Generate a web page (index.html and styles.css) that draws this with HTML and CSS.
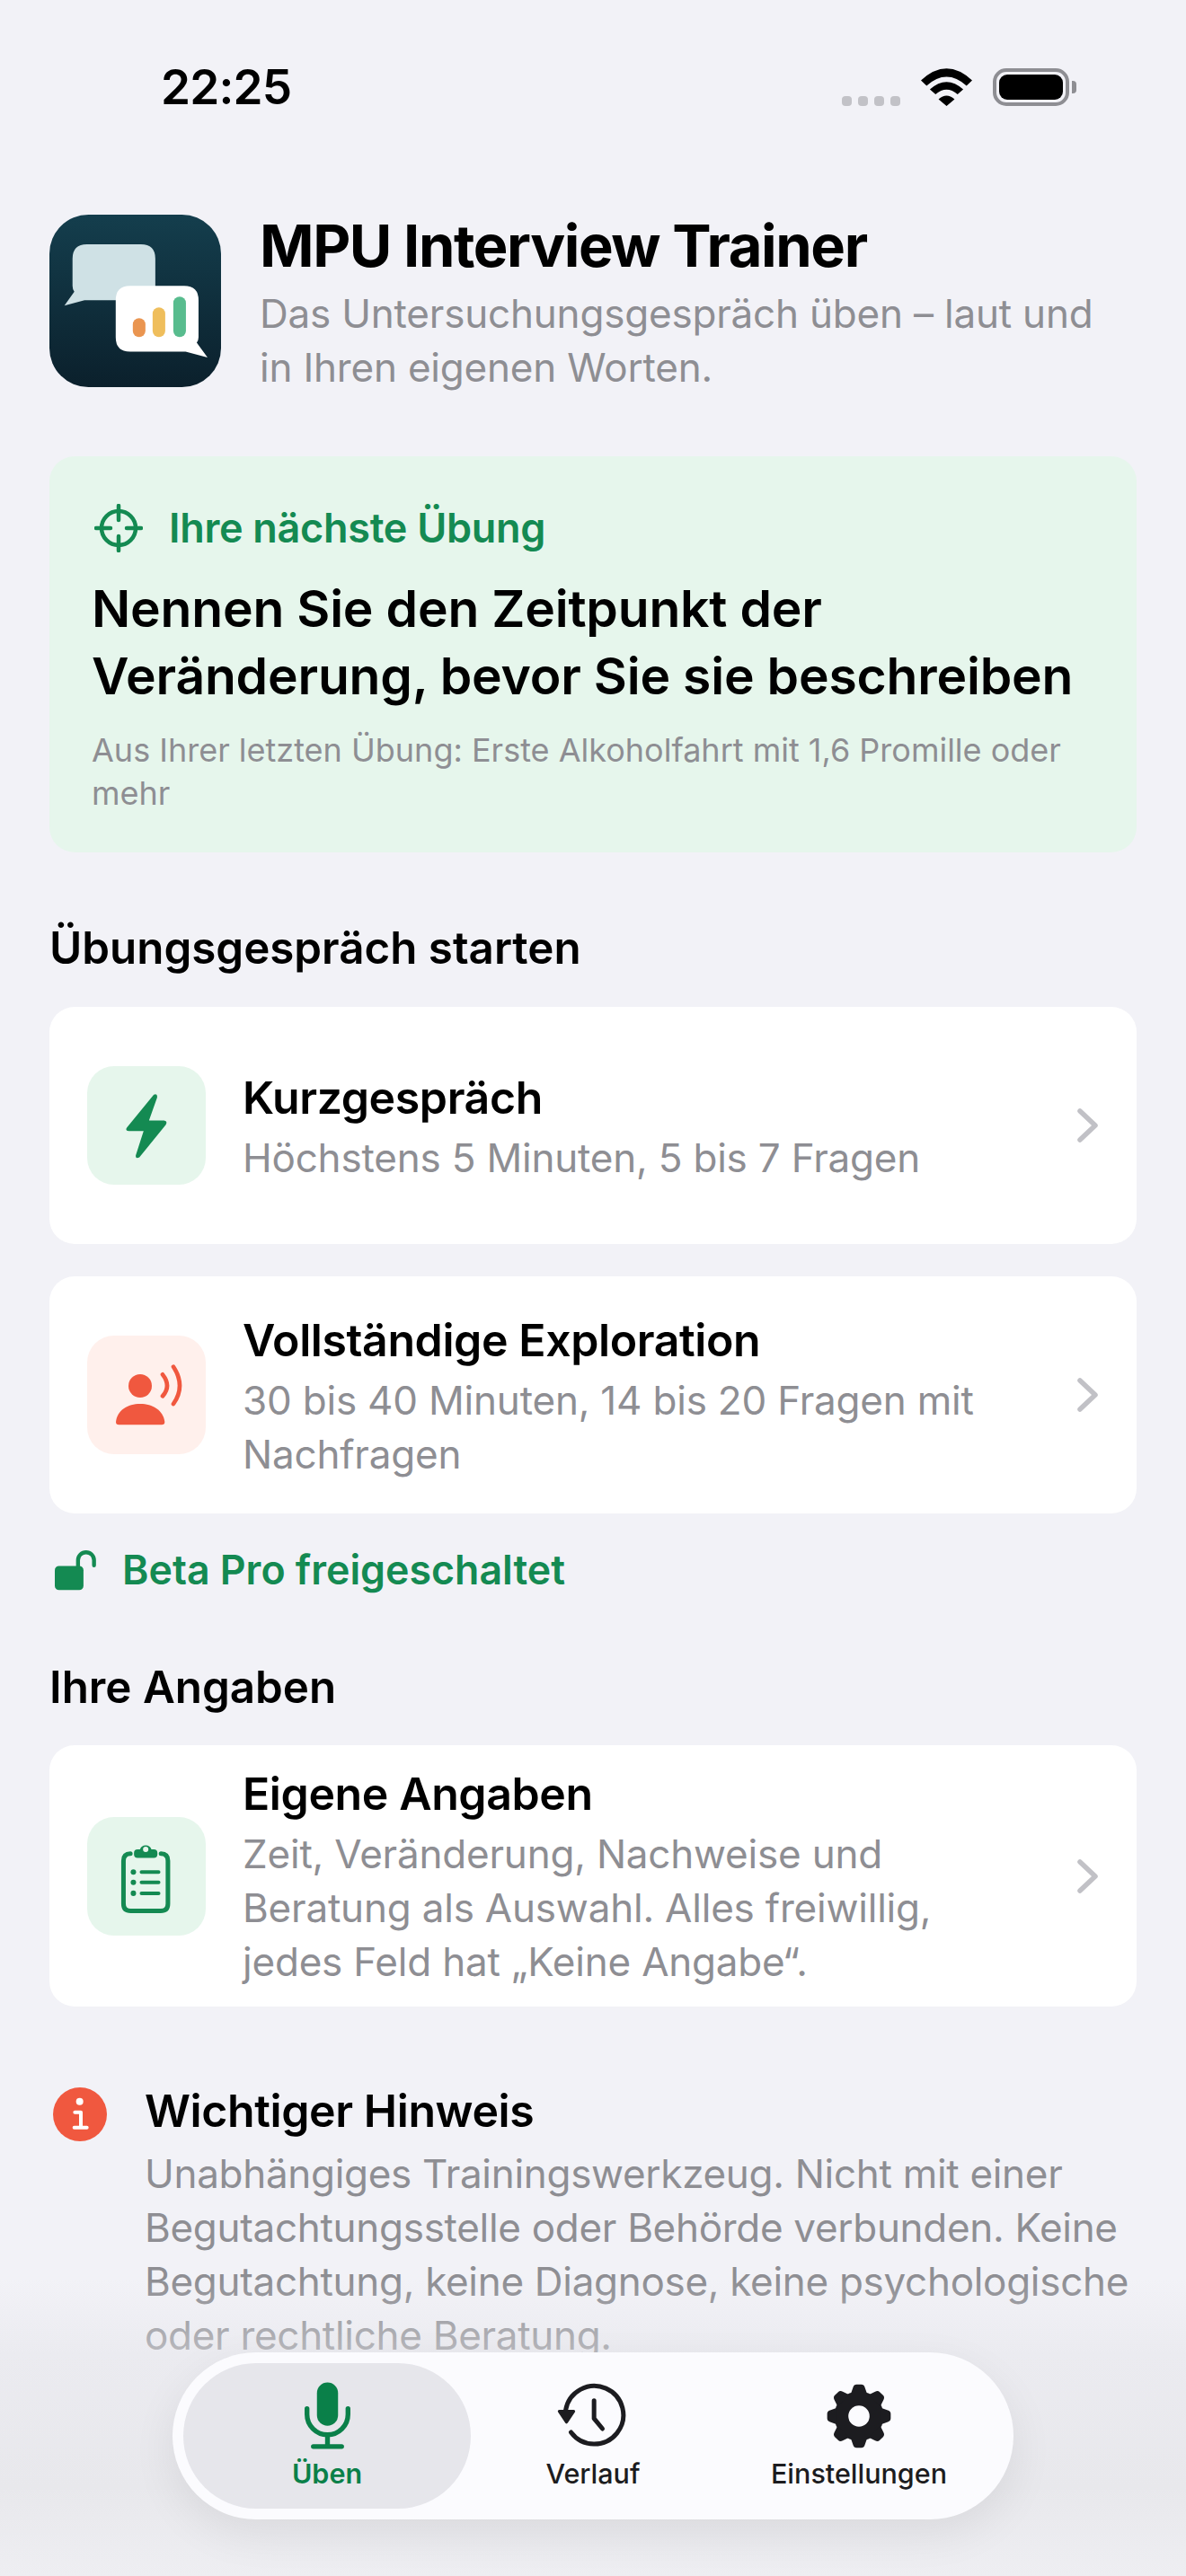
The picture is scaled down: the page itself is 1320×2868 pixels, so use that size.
FILE: index.html
```html
<!DOCTYPE html>
<html lang="de">
<head>
    <meta charset="UTF-8">
    <meta name="viewport" content="width=device-width, initial-scale=1.0">
    <title>MPU Interview Trainer</title>
    <link rel="stylesheet" href="styles.css">
</head>
<body>
    <div class="status-bar">
        <span class="time">22:25</span>
        <div class="status-icons">
            <div class="signal"><i></i><i></i><i></i><i></i></div>
            <svg class="wifi" viewBox="375 75 172 125"><path d="M375 115 Q461 35 547 115 L528 133 Q461 73 394 133Z M405 145 Q461 95 517 145 L498 162 Q461 130 424 162Z M434 178 Q461 155 488 178 L461 201Z" fill="#000"/></svg>
            <div class="battery"><div class="battery-fill"></div></div>
            <div class="battery-tip"></div>
        </div>
    </div>

    <header class="app-header">
        <svg class="app-icon" viewBox="73 57 572 575">
            <defs>
                <linearGradient id="iconBg" x1="0" y1="0" x2="0" y2="1">
                    <stop offset="0" stop-color="#143e4d"/>
                    <stop offset="1" stop-color="#0b202c"/>
                </linearGradient>
            </defs>
            <rect x="73" y="57" width="572" height="575" rx="130" fill="url(#iconBg)"/>
            <path d="M198 156 H378 Q426 156 426 204 V342 H190 L123 360 L156 314 Q150 305 150 294 V204 Q150 156 198 156Z" fill="#cfe1e5"/>
            <path d="M342 294 H522 Q570 294 570 342 V466 Q570 476 564 484 L600 533 L527 514 H342 Q294 514 294 466 V342 Q294 294 342 294Z" fill="#fff"/>
            <rect x="351" y="402" width="42" height="63" rx="21" fill="#ea9550"/>
            <rect x="417" y="366" width="42" height="99" rx="21" fill="#efbe5c"/>
            <rect x="486" y="330" width="42" height="135" rx="21" fill="#58bc8e"/>
        </svg>
        <div class="app-header-text">
            <h1>MPU Interview Trainer</h1>
            <p>Das Untersuchungsgespräch üben – laut und in Ihren eigenen Worten.</p>
        </div>
    </header>

    <section class="next-card">
        <div class="next-label">
            <svg class="target" viewBox="0 0 54 54"><circle cx="27" cy="27" r="19"/><path d="M2 27H18M36 27H52M27 2V18M27 36V52"/></svg>
            <span>Ihre nächste Übung</span>
        </div>
        <h2>Nennen Sie den Zeitpunkt der Veränderung, bevor Sie sie beschreiben</h2>
        <p>Aus Ihrer letzten Übung: Erste Alkoholfahrt mit 1,6 Promille oder mehr</p>
    </section>

    <h3 class="section-title first">Übungsgespräch starten</h3>

    <div class="row-card short">
        <div class="tile green">
            <svg viewBox="78 81 395 395"><path d="M300 176 L210 286 Q204 296 216 297 L266 297 L240 378 Q238 392 252 385 L340 276 Q347 264 334 262 L284 262 L311 186 Q313 170 300 176Z" fill="#148a52"/></svg>
        </div>
        <div class="row-text">
            <h4>Kurzgespräch</h4>
            <p>Höchstens 5 Minuten, 5 bis 7 Fragen</p>
        </div>
        <svg class="chevron" viewBox="0 0 26 40"><path d="M4 4L21 20L4 36"/></svg>
    </div>

    <div class="row-card short">
        <div class="tile red">
            <svg viewBox="0 0 396 396">
                <circle cx="177" cy="168" r="39" fill="#f0583f"/>
                <path d="M96 288 C100 250 135 228 177 228 C219 228 254 250 259 288 Q259 298 249 298 H106 Q96 298 96 288Z" fill="#f0583f"/>
                <path d="M252 130 Q282 168 252 202M288 104 Q330 168 288 228" fill="none" stroke="#f0583f" stroke-width="14" stroke-linecap="round"/>
            </svg>
        </div>
        <div class="row-text">
            <h4>Vollständige Exploration</h4>
            <p>30 bis 40 Minuten, 14 bis 20 Fragen mit Nachfragen</p>
        </div>
        <svg class="chevron" viewBox="0 0 26 40"><path d="M4 4L21 20L4 36"/></svg>
    </div>

    <div class="unlocked">
        <svg viewBox="60 75 140 137">
            <rect x="60" y="130" width="95" height="80" rx="14" fill="#148a52"/>
            <path d="M137 132V111A26.5 26.5 0 0 1 190 111V128" fill="none" stroke="#148a52" stroke-width="13" stroke-linecap="round"/>
        </svg>
        <span>Beta Pro freigeschaltet</span>
    </div>

    <h3 class="section-title">Ihre Angaben</h3>

    <div class="row-card tall">
        <div class="tile green">
            <svg viewBox="78 72 395 395">
                <path d="M222 194 Q199 194 199 218 V361 Q199 385 223 385 H323 Q347 385 347 361 V218 Q347 194 324 194" fill="none" stroke="#148a52" stroke-width="15" stroke-linecap="round"/>
                <path d="M246 180 H254 A20 20 0 0 1 292 180 H300 Q312 180 312 192 V197 Q312 208 300 208 H246 Q234 208 234 197 V192 Q234 180 246 180Z" fill="#148a52"/>
                <circle cx="273" cy="180" r="9" fill="#e6f6ec"/>
                <circle cx="232" cy="255" r="9" fill="#148a52"/>
                <circle cx="232" cy="290" r="9" fill="#148a52"/>
                <circle cx="232" cy="326" r="9" fill="#148a52"/>
                <path d="M259 255H316M259 290H316M259 326H316" stroke="#148a52" stroke-width="12" stroke-linecap="round"/>
            </svg>
        </div>
        <div class="row-text">
            <h4>Eigene Angaben</h4>
            <p>Zeit, Veränderung, Nachweise und Beratung als Auswahl. Alles freiwillig, jedes Feld hat „Keine Angabe“.</p>
        </div>
        <svg class="chevron" viewBox="0 0 26 40"><path d="M4 4L21 20L4 36"/></svg>
    </div>

    <div class="notice">
        <svg class="notice-icon" viewBox="57 42 180 180">
            <circle cx="147" cy="132" r="90" fill="#f0583f"/>
            <circle cx="146" cy="89" r="12" fill="#fff"/>
            <path d="M130 125H150V176M128 176H170" fill="none" stroke="#fff" stroke-width="12" stroke-linecap="round" stroke-linejoin="round"/>
        </svg>
        <div class="notice-text">
            <h4>Wichtiger Hinweis</h4>
            <p>Unabhängiges Trainingswerkzeug. Nicht mit einer Begutachtungsstelle oder Behörde verbunden. Keine Begutachtung, keine Diagnose, keine psychologische oder rechtliche Beratung.</p>
        </div>
    </div>

    <div class="bottom-fade"></div>

    <nav class="tab-bar">
        <div class="tab active">
            <svg class="tab-icon mic" viewBox="110 60 170 230">
                <rect x="160" y="66" width="70" height="144" rx="35" fill="#0a8049"/>
                <path d="M127 153V172A68 68 0 0 0 263 172V153M195 240V279M148 279H242" fill="none" stroke="#0a8049" stroke-width="16" stroke-linecap="round"/>
            </svg>
            <span>Üben</span>
        </div>
        <div class="tab narrow">
            <svg class="tab-icon history" viewBox="50 70 245 225">
                <path d="M105 238A97 97 0 1 0 87 165" fill="none" stroke="#1c1c20" stroke-width="15" stroke-linecap="round"/>
                <path d="M66 168H114L90 204Z" fill="#1c1c20" stroke="#1c1c20" stroke-width="10" stroke-linejoin="round"/>
                <path d="M182 132V192L210 226" fill="none" stroke="#1c1c20" stroke-width="15" stroke-linecap="round" stroke-linejoin="round"/>
            </svg>
            <span>Verlauf</span>
        </div>
        <div class="tab">
            <svg class="tab-icon gear" viewBox="-110 -110 220 220">
                <circle r="84" fill="#1c1c20"/>
                <g fill="#1c1c20">
                    <path id="tooth" d="M-28 -75L-20 -98Q-17 -108 -8 -108H8Q17 -108 20 -98L28 -75Z"/>
                    <use href="#tooth" transform="rotate(45)"/>
                    <use href="#tooth" transform="rotate(90)"/>
                    <use href="#tooth" transform="rotate(135)"/>
                    <use href="#tooth" transform="rotate(180)"/>
                    <use href="#tooth" transform="rotate(225)"/>
                    <use href="#tooth" transform="rotate(270)"/>
                    <use href="#tooth" transform="rotate(315)"/>
                </g>
                <circle r="36" fill="#fbfbfe"/>
            </svg>
            <span>Einstellungen</span>
        </div>
    </nav>
</body>
</html>
```

FILE: styles.css
```css
* {
    box-sizing: border-box;
}

body {
    font-family: Inter, "Liberation Sans", sans-serif;
    margin: 0;
    width: 1320px;
    height: 2868px;
    padding: 0 55px;
    background: #f2f2f7;
    color: #000;
    overflow: hidden;
    position: relative;
}

h1, h2, h3, h4, p {
    margin: 0;
}

/* status bar */
.status-bar {
    height: 194px;
    margin: 0 -55px;
    padding: 0 122px 0 179px;
    display: flex;
    justify-content: space-between;
    align-items: center;
}

.time {
    font-size: 53px;
    font-weight: 600;
    letter-spacing: -0.8px;
}

.status-icons {
    display: flex;
    align-items: flex-end;
    height: 42px;
}

.signal {
    display: flex;
    gap: 7px;
    margin-right: 23px;
}

.signal i {
    width: 11px;
    height: 11px;
    border-radius: 4px;
    background: #c2c2c7;
}

.wifi {
    width: 57px;
    height: 42px;
    margin-right: 23px;
}

.battery {
    width: 85px;
    height: 42px;
    border: 4px solid #8e8e93;
    border-radius: 15px;
    padding: 3px;
}

.battery-fill {
    height: 100%;
    background: #000;
    border-radius: 9px;
}

.battery-tip {
    width: 5px;
    height: 14px;
    margin: 0 0 14px 3px;
    background: #8e8e93;
    border-radius: 0 4px 4px 0;
}

/* header */
.app-header {
    display: flex;
    gap: 43px;
    margin-top: 45px;
}

.app-icon {
    width: 191px;
    height: 192px;
    flex: none;
}

.app-header-text {
    width: 950px;
    padding-top: 2px;
}

.app-header-text h1 {
    font-size: 65px;
    font-weight: 700;
    line-height: 66px;
    letter-spacing: -1.4px;
}

.app-header-text p {
    font-size: 44px;
    line-height: 60px;
    letter-spacing: -0.2px;
    color: #8e8e93;
    margin-top: 12px;
}

/* next exercise */
.next-card {
    margin-top: 69px;
    height: 441px;
    padding: 52px 50px 0 47px;
    background: #e6f6ec;
    border-radius: 28px;
}

.next-label {
    display: flex;
    align-items: center;
    gap: 29px;
    color: #148a52;
    font-size: 45px;
    font-weight: 600;
    letter-spacing: -0.3px;
}

.target {
    width: 54px;
    height: 54px;
    margin-left: 3px;
    fill: none;
    stroke: #148a52;
    stroke-width: 4.5;
    stroke-linecap: round;
}

.next-card h2 {
    font-size: 57px;
    font-weight: 600;
    line-height: 75px;
    letter-spacing: -0.2px;
    margin-top: 25px;
}

.next-card p {
    font-size: 36px;
    line-height: 48px;
    color: #8e8e93;
    margin-top: 21px;
}

/* sections */
.section-title {
    font-size: 49.3px;
    font-weight: 600;
    line-height: 60px;
    margin-top: 70px;
}

.section-title.first {
    margin-top: 76px;
    margin-bottom: 36px;
}

.row-card {
    display: flex;
    align-items: center;
    background: #fff;
    border-radius: 28px;
    padding: 0 41px 0 42px;
    margin-bottom: 36px;
}

.row-card.short {
    height: 264px;
}

.row-card.tall {
    height: 291px;
    margin-top: 35px;
}

.tile {
    width: 132px;
    height: 132px;
    border-radius: 30px;
    flex: none;
}

.tile svg {
    width: 132px;
    height: 132px;
    display: block;
}

.tile.green {
    background: #e6f6ec;
}

.tile.red {
    background: #fff0ec;
}

.row-text {
    flex: 1;
    margin: 0 40px 0 41px;
    padding-top: 4px;
}

.row-text h4,
.notice-text h4 {
    font-size: 50px;
    font-weight: 600;
    line-height: 60px;
    letter-spacing: -0.4px;
}

.row-text p,
.notice-text p {
    font-size: 44px;
    line-height: 60px;
    letter-spacing: -0.2px;
    color: #8e8e93;
}

.row-text p {
    margin-top: 7px;
}

.row-card.tall .row-text {
    margin-right: 70px;
}

.row-card.tall .row-text p {
    letter-spacing: -0.2px;
}

.chevron {
    width: 26px;
    height: 40px;
    flex: none;
    fill: none;
    stroke: #c1c1c6;
    stroke-width: 5.5;
    stroke-linecap: round;
    stroke-linejoin: round;
}

/* unlocked note */
.unlocked {
    display: flex;
    align-items: center;
    gap: 28px;
    margin-top: -3px;
    padding-left: 6px;
    color: #148a52;
    font-size: 44.7px;
    font-weight: 600;
    height: 60px;
}

.unlocked svg {
    width: 47px;
    height: 46px;
}

/* notice */
.notice {
    display: flex;
    gap: 42px;
    margin-top: 86px;
    padding-left: 4px;
}

.notice-icon {
    width: 60px;
    height: 60px;
    flex: none;
    margin-top: 4px;
}

.notice-text {
    flex: 1;
}

.notice-text p {
    margin-top: 10px;
    letter-spacing: -0.3px;
}

/* bottom overlay */
.bottom-fade {
    position: absolute;
    left: 0;
    right: 0;
    bottom: 0;
    height: 330px;
    background: linear-gradient(to bottom, rgba(228, 228, 233, 0), rgba(228, 228, 233, 0.5) 25%, #e8e8ec 70%, #eeeef2 100%);
}

.tab-bar {
    position: absolute;
    left: 192px;
    top: 2619px;
    width: 936px;
    height: 186px;
    padding: 12px;
    display: flex;
    background: #fbfbfe;
    border-radius: 93px;
    box-shadow: 0 16px 50px rgba(0, 0, 0, 0.07);
}

.tab {
    width: 320px;
    height: 162px;
    border-radius: 81px;
    display: flex;
    flex-direction: column;
    align-items: center;
    color: #1c1c20;
    font-size: 30.5px;
    font-weight: 500;
    line-height: 36px;
}

.tab.narrow {
    width: 272px;
}

.tab.active {
    background: #e6e6eb;
    color: #0a8049;
    font-weight: 600;
}

.tab-icon {
    height: 78px;
    margin-top: 19px;
    margin-bottom: 8px;
}

.tab-icon.mic {
    width: 57px;
}

.tab-icon.history {
    width: 82px;
    height: 75px;
    margin-top: 21px;
    margin-bottom: 9px;
    margin-right: 4px;
}

.tab-icon.gear {
    width: 72px;
    height: 72px;
    margin-top: 23px;
    margin-bottom: 10px;
}
```
